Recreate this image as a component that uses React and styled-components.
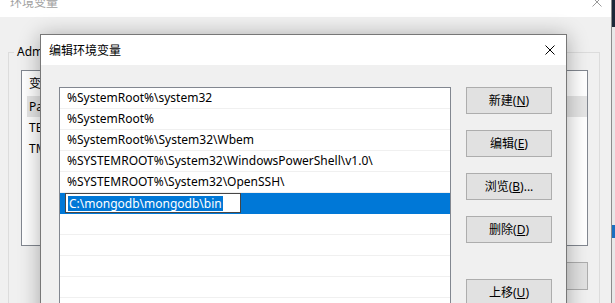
import React from 'react';
import styled, {createGlobalStyle} from 'styled-components';

const paths = [
  '%SystemRoot%\\system32',
  '%SystemRoot%',
  '%SystemRoot%\\System32\\Wbem',
  '%SYSTEMROOT%\\System32\\WindowsPowerShell\\v1.0\\',
  '%SYSTEMROOT%\\System32\\OpenSSH\\',
];

const buttons = [
  {label: '新建', key: 'N'},
  {label: '编辑', key: 'E'},
  {label: '浏览', key: 'B', tail: '...'},
  {label: '删除', key: 'D'},
  {label: '上移', key: 'U', apart: true},
];

const CloseIcon = ({color = '#000'}) => (
  <svg width="10" height="10" viewBox="0 0 10 10">
    <path d="M0.5 0.5 L9.5 9.5 M9.5 0.5 L0.5 9.5" stroke={color} strokeWidth="1" fill="none" />
  </svg>
);

const App = () => {
  return (
    <Desktop>
      <GlobalStyle />
      <BackWindow>
        <BackTitleBar>
          <span>环境变量</span>
          <CloseIcon color="#9a9a9a" />
        </BackTitleBar>
        <BackBody>
          <GroupBox>
            <GroupLegend>Administrator 的用户变量(U)</GroupLegend>
            <BackList>
              <BackHeader>
                <BackCell>变量</BackCell>
                <BackCell>值</BackCell>
              </BackHeader>
              <BackRow $active>
                <BackCell>Path</BackCell>
              </BackRow>
              <BackRow>
                <BackCell>TEMP</BackCell>
              </BackRow>
              <BackRow>
                <BackCell>TMP</BackCell>
              </BackRow>
            </BackList>
            <BackButton>新建(N)...</BackButton>
          </GroupBox>
        </BackBody>
      </BackWindow>
      <Strip>
        <StripTop />
        <StripMark />
      </Strip>

      <Dialog>
        <DialogTitleBar>
          <span>编辑环境变量</span>
          <CloseIcon />
        </DialogTitleBar>
        <DialogBody>
          <PathList>
            {paths.map((p) => (
              <PathRow key={p}>{p}</PathRow>
            ))}
            <PathRow $selected>
              <EditBox>
                <SelText>C:\mongodb\mongodb\bin</SelText>
              </EditBox>
            </PathRow>
            <PathRow />
            <PathRow />
            <PathRow />
            <PathRow />
          </PathList>
          <ButtonCol>
            {buttons.map((b) => (
              <DButton key={b.key} $apart={b.apart}>
                {b.label}(<Key>{b.key}</Key>){b.tail}
              </DButton>
            ))}
          </ButtonCol>
        </DialogBody>
      </Dialog>
    </Desktop>
  );
};

export default App;

const GlobalStyle = createGlobalStyle`
  html, body {
    margin: 0;
    padding: 0;
    background: #f0f0f0;
    overflow: hidden;
  }
  body {
    font-family: "Noto Sans", "Noto Sans CJK SC", sans-serif;
    font-size: 12px;
    color: #000;
  }
  * { box-sizing: border-box; }
`;

const Desktop = styled.div`
  position: relative;
  display: flex;
  width: 615px;
  height: 303px;
  overflow: hidden;
`;

const BackWindow = styled.div`
  display: flex;
  flex-direction: column;
  width: 612px;
  height: 330px;
  margin-top: -14px;
  flex-shrink: 0;
  background: #f0f0f0;
  border-right: 1px solid #8c8c8c;
`;

const BackTitleBar = styled.div`
  display: flex;
  align-items: center;
  justify-content: space-between;
  height: 31px;
  flex-shrink: 0;
  padding: 0 9px 0 10px;
  background: #fff;
  color: #a0a0a0;
  font-family: "Noto Sans CJK SC", sans-serif;
  line-height: 16px;
`;

const BackBody = styled.div`
  flex: 1;
  padding: 35px 11px 0 8px;
`;

const GroupBox = styled.div`
  position: relative;
  display: flex;
  flex-direction: column;
  height: 300px;
  padding: 17px 11px 0 12px;
  border: 1px solid #dcdcdc;
`;

const GroupLegend = styled.span`
  position: absolute;
  top: -9px;
  left: 5px;
  padding: 0 3px;
  background: #f0f0f0;
  line-height: 16px;
  white-space: nowrap;
`;

const BackList = styled.div`
  height: 176px;
  padding-left: 5px;
  background: #fff;
  border: 1px solid #828790;
`;

const BackHeader = styled.div`
  display: flex;
  height: 25px;
  line-height: 25px;
`;

const BackRow = styled.div`
  display: flex;
  height: 21px;
  line-height: 21px;
  background: ${(p) => (p.$active ? '#e5e5e5' : 'transparent')};
`;

const BackCell = styled.span`
  width: 170px;
  padding-left: 2px;
  white-space: nowrap;
`;

const BackButton = styled.div`
  align-self: flex-end;
  width: 110px;
  height: 28px;
  margin-top: 16px;
  line-height: 26px;
  text-align: center;
  background: #e1e1e1;
  border: 1px solid #adadad;
`;

const Strip = styled.div`
  display: flex;
  flex-direction: column;
  width: 3px;
  flex-shrink: 0;
  background: #e8e8e8;
`;

const StripTop = styled.div`
  height: 27px;
  background: #1c2838;
`;

const StripMark = styled.div`
  height: 13px;
  margin-top: 198px;
  background: #1a6fc0;
`;

const Dialog = styled.div`
  position: absolute;
  left: 40px;
  top: 34px;
  display: flex;
  flex-direction: column;
  width: 527px;
  height: 300px;
  background: #f0f0f0;
  border: 1px solid #777;
  box-shadow: 0 2px 20px rgba(0, 0, 0, 0.32);
`;

const DialogTitleBar = styled.div`
  display: flex;
  align-items: center;
  justify-content: space-between;
  height: 30px;
  flex-shrink: 0;
  padding: 0 11px 0 8px;
  background: #fff;
  font-family: "Noto Sans CJK SC", sans-serif;
  line-height: 16px;
`;

const DialogBody = styled.div`
  display: flex;
  align-items: flex-start;
  gap: 15px;
  padding: 22px 14px 0 18px;
`;

const PathList = styled.div`
  display: flex;
  flex-direction: column;
  width: 392px;
  height: 260px;
  background: #fff;
  border: 1px solid #828790;
`;

const PathRow = styled.div`
  display: flex;
  align-items: flex-start;
  height: 21px;
  flex-shrink: 0;
  padding-left: ${(p) => (p.$selected ? '5px' : '7px')};
  line-height: 20px;
  white-space: nowrap;
  background: ${(p) => (p.$selected ? '#0078d7' : 'transparent')};
  border-bottom: 1px solid ${(p) => (p.$selected ? '#0078d7' : '#f0f0f0')};
`;

const EditBox = styled.div`
  display: flex;
  align-items: center;
  width: 176px;
  height: 20px;
  padding-left: 2px;
  background: #fff;
  border: 1px solid #464646;
`;

const SelText = styled.span`
  padding: 0 1px;
  line-height: 15px;
  color: #fff;
  background: #0078d7;
`;

const ButtonCol = styled.div`
  display: flex;
  flex-direction: column;
  gap: 16px;
  width: 86px;
  flex-shrink: 0;
`;

const DButton = styled.div`
  height: 27px;
  margin-top: ${(p) => (p.$apart ? '20px' : '0')};
  line-height: 25px;
  text-align: center;
  white-space: nowrap;
  background: #e1e1e1;
  border: 1px solid #adadad;
`;

const Key = styled.span`
  text-decoration: underline;
`;
